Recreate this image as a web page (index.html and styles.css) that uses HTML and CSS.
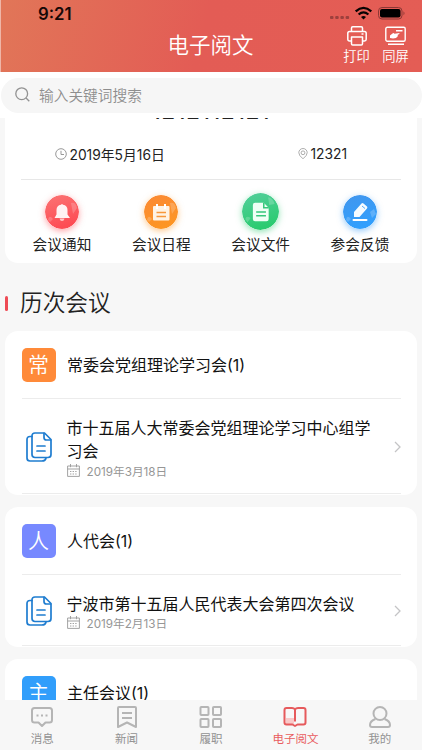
FILE: index.html
```html
<!DOCTYPE html>
<html lang="zh-CN">
<head>
<meta charset="utf-8">
<meta name="viewport" content="width=device-width, initial-scale=1">
<title>电子阅文</title>
<link rel="stylesheet" href="styles.css">
</head>
<body>
<svg class="defs" width="0" height="0">
  <defs>
    <linearGradient id="red" x1="0" y1="0" x2="0.3" y2="1"><stop stop-color="#fb7474"/><stop offset="1" stop-color="#fd4c54"/></linearGradient>
    <linearGradient id="orange" x1="0" y1="0" x2="0.3" y2="1"><stop stop-color="#fb8934"/><stop offset="1" stop-color="#fd9524"/></linearGradient>
    <linearGradient id="green" x1="0" y1="0" x2="0.3" y2="1"><stop stop-color="#54cf9c"/><stop offset="1" stop-color="#2bcb70"/></linearGradient>
    <linearGradient id="blue" x1="0" y1="0" x2="0.3" y2="1"><stop stop-color="#4296ed"/><stop offset="1" stop-color="#319ffd"/></linearGradient>
    <symbol id="docs" viewBox="0 0 26 30">
      <g fill="none" stroke="#1f7dd0" stroke-width="1.7" stroke-linejoin="round" stroke-linecap="round">
        <path d="M6 4.500H4Q1 4.500 1 7.500V26Q1 29 4 29H16Q19.500 29 20 26"/>
        <path d="M9 1H18.500L25 7.500V22.500Q25 25.500 22 25.500H9Q6 25.500 6 22.500V4Q6 1 9 1Z"/>
        <path d="M18 1.300V5.500Q18 8 20.500 8H24.500M11 14H19M11 19H19"/>
      </g>
    </symbol>
    <symbol id="cal" viewBox="0 0 13 13">
      <g fill="none" stroke="#999" stroke-width="0.9"><path d="M.6 2H12.400V12.400H.6ZM.6 5H12.400M3.500 0V3.200M9.500 0V3.200"/><path d="M3 7.500H10M3 10H10" stroke-dasharray="1.400 1.200"/></g>
    </symbol>
    <symbol id="arrow" viewBox="0 0 7 12"><path d="M1 1L6 6L1 11" fill="none" stroke="#c4c4c6" stroke-width="1.300"/></symbol>
  </defs>
</svg>
<div class="app">
  <header class="header">
    <div class="status">
      <span class="time">9:21</span>
      <svg class="signals" width="76" height="16" viewBox="0 0 76 16">
        <g fill="#9d403d"><rect x="0" y="10" width="3.500" height="3" rx="1"/><rect x="5.200" y="10" width="3.500" height="3" rx="1"/><rect x="10.400" y="10" width="3.500" height="3" rx="1"/><rect x="15.600" y="10" width="3.500" height="3" rx="1"/></g>
        <g fill="none" stroke="#080303" stroke-width="2.300"><path d="M25.700 5.300Q33.500 -1.500 41.300 5.300"/><path d="M28.600 8.500Q33.500 4.300 38.400 8.500"/></g>
        <path d="M31 10.900Q33.500 8.900 36 10.900L33.500 13.500Z" fill="#080303"/>
        <rect x="48.500" y="1.500" width="23.500" height="11.500" rx="3.500" fill="none" stroke="#8c3835"/>
        <rect x="50" y="3" width="20.500" height="8.500" rx="2" fill="#000"/>
        <path d="M73.500 5.200Q75.500 7.200 73.500 9.300Z" fill="#8c3835"/>
      </svg>
    </div>
    <div class="navbar">
      <h1>电子阅文</h1>
      <div class="action">
        <svg width="20" height="20" viewBox="0 0 20 20" fill="none" stroke="#fff" stroke-width="1.500" stroke-linejoin="round"><path d="M4.500 5.500V2Q4.500.8 5.700.8H14.300Q15.500.8 15.500 2V5.500M4 15H2.500Q.8 15 .8 13.300V7.300Q.8 5.500 2.500 5.500H17.500Q19.200 5.500 19.200 7.300V13.300Q19.200 15 17.500 15H16M4.500 11H15.500V17.700Q15.500 19 14.300 19H5.700Q4.500 19 4.500 17.700Z"/><path d="M14.500 8H16.500"/></svg>
        <span>打印</span>
      </div>
      <div class="action">
        <svg width="21" height="20" viewBox="0 0 21 20"><g fill="none" stroke="#fff" stroke-width="1.400"><rect x=".8" y="1.300" width="19.400" height="14" rx="1.500"/><path d="M3 18.200H19M11 4.800H17.500"/></g><path d="M5 9.500L7.500 7.500Q8.500 6.500 9.500 7.800L14.500 7Q15 8 12.500 9L13 10Q11.500 12.500 8 12.500L5 12Z" fill="#fff"/></svg>
        <span>同屏</span>
      </div>
    </div>
  </header>
  <div class="search">
    <div class="pill">
      <svg width="15" height="15" viewBox="0 0 15 15" fill="none" stroke="#929292" stroke-width="1.300"><circle cx="6.700" cy="6.700" r="5.900"/><path d="M11 11L14.300 14.300"/></svg>
      <span>输入关键词搜索</span>
    </div>
  </div>
  <main class="content">
    <section class="card meeting">
      <h2>1212112121</h2>
      <div class="info">
        <div><svg width="12" height="12" viewBox="0 0 12 12" fill="none" stroke="#999"><circle cx="6" cy="6" r="5.300"/><path d="M6 2.800V6.500H9"/></svg><span>2019年5月16日</span></div>
        <div><svg width="10" height="12" viewBox="0 0 10 12" fill="none" stroke="#999" stroke-width=".8"><path d="M5 10.800Q.8 7.500 .8 4.700A4.200 4.200 0 0 1 9.200 4.700Q9.200 7.500 5 10.800Z"/><circle cx="5" cy="4.800" r="1.900"/></svg><span>12321</span></div>
      </div>
      <nav class="shortcuts">
        <div class="shortcut red"><svg viewBox="0 0 34 34"><circle cx="17" cy="17" r="17" fill="url(#red)"/><path d="M26 8Q31 7 32 13L28 19ZM3 25Q4 19 8 24L5 27Z" fill="#fff" opacity=".2"/><path d="M9.500 23L11.500 19.500V15Q11.500 10.500 16 9.800Q17 8 18 9.800Q22.500 10.500 22.500 15V19.500L25 23Z" fill="#fff" opacity=".92"/><path d="M14.500 23.500H19.500Q19 26 17 26T14.500 23.500Z" fill="#ffc4c4"/></svg><span>会议通知</span></div>
        <div class="shortcut orange"><svg viewBox="0 0 34 34"><circle cx="17" cy="17" r="17" fill="url(#orange)"/><path d="M26 8Q31 7 32 13L28 19ZM3 25Q4 19 8 24L5 27Z" fill="#fff" opacity=".2"/><rect x="9" y="11" width="16.500" height="14.500" rx="1" fill="#fff3e4"/><path d="M13 9V14M21 9V14" stroke="#fff" stroke-width="2"/><path d="M12.500 17.500H22M12.500 21.500H22" stroke="#f7983b" stroke-width="1.400"/></svg><span>会议日程</span></div>
        <div class="shortcut green"><svg viewBox="0 0 34 34"><circle cx="17" cy="17" r="17" fill="url(#green)"/><path d="M24 4Q28 4 30 10L25 11ZM3 24Q4 20 8 23L5 27Z" fill="#fff" opacity=".2"/><path d="M12 9H20L24.500 13.500V24Q24.500 26 22.500 26H12Q10 26 10 24V11Q10 9 12 9Z" fill="#effff5"/><path d="M20 9V13.500H24.500M13 17.500H22M13 21H22" stroke="#36c87b" stroke-width="1.400" fill="none"/></svg><span>会议文件</span></div>
        <div class="shortcut blue"><svg viewBox="0 0 34 34"><circle cx="17" cy="17" r="17" fill="url(#blue)"/><path d="M27 17L31 14L33 19L29 23ZM3 25Q4 19 8 24L5 27Z" fill="#fff" opacity=".2"/><path d="M11 22V17L18.500 8.500Q19.500 7.500 20.500 8.500L24 11.500Q24.800 12.500 24 13.500L16.500 22Z" fill="#f5fbff"/><path d="M19 11L22 13.500" stroke="#55a9f5"/><path d="M10.500 25H23.500" stroke="#fff" stroke-width="2" stroke-linecap="round"/></svg><span>参会反馈</span></div>
      </nav>
    </section>
    <h3 class="section-title">历次会议</h3>
    <section class="card group">
      <div class="group-head"><b class="badge b-orange">常</b><span>常委会党组理论学习会(1)</span></div>
      <div class="item tall"><svg class="docs"><use href="#docs"/></svg><div class="text"><p>市十五届人大常委会党组理论学习中心组学习会</p><div class="date"><svg><use href="#cal"/></svg><span>2019年3月18日</span></div></div><svg class="arrow"><use href="#arrow"/></svg></div>
    </section>
    <section class="card group">
      <div class="group-head"><b class="badge b-purple">人</b><span>人代会(1)</span></div>
      <div class="item"><svg class="docs"><use href="#docs"/></svg><div class="text"><p>宁波市第十五届人民代表大会第四次会议</p><div class="date"><svg><use href="#cal"/></svg><span>2019年2月13日</span></div></div><svg class="arrow"><use href="#arrow"/></svg></div>
    </section>
    <section class="card group">
      <div class="group-head"><b class="badge b-blue">主</b><span>主任会议(1)</span></div>
    </section>
  </main>
  <footer class="tabs">
    <div class="tab"><svg viewBox="0 0 24 24"><path d="M4.500 3H19.500Q22 3 22 5.500V15Q22 17.500 19.500 17.500H15.500L12 21L8.500 17.500H4.500Q2 17.500 2 15V5.500Q2 3 4.500 3Z"/><path d="M6.500 10.500H17.500" stroke-dasharray="2 2.500" stroke-width="2"/></svg><span>消息</span></div>
    <div class="tab"><svg viewBox="0 0 24 24"><path d="M4 2H20Q21 2 21 3V22L12 17.500L3 22V3Q3 2 4 2ZM7 8H17M7 13H17"/></svg><span>新闻</span></div>
    <div class="tab"><svg viewBox="0 0 24 24"><rect x="1.500" y="2" width="8" height="8" rx=".8"/><rect x="14" y="2" width="8" height="8" rx=".8"/><rect x="1.500" y="14" width="8" height="8" rx=".8"/><rect x="14" y="14" width="8" height="8" rx=".8"/></svg><span>履职</span></div>
    <div class="tab active"><svg viewBox="0 0 24 24"><path d="M3 13H11V19H3Z" fill="#f9c9c9" stroke="none"/><path d="M12 4.500Q11 3 9 3H3.500Q1.500 3 1.500 5V17.500Q1.500 19.500 3.500 19.500H9.500L12 21L14.500 19.500H20.500Q22.500 19.500 22.500 17.500V5Q22.500 3 20.500 3H15Q13 3 12 4.500V16.500"/></svg><span>电子阅文</span></div>
    <div class="tab"><svg viewBox="0 0 24 24"><circle cx="12" cy="8.500" r="6.500"/><path d="M7.500 14Q2 16 2 20Q2 22 4 22H20Q22 22 22 20Q22 16 16.500 14"/></svg><span>我的</span></div>
  </footer>
</div>
</body>
</html>
```

FILE: styles.css
```css
* { box-sizing: border-box; margin: 0; padding: 0; }
body { font-family: Inter, "Noto Sans CJK SC", sans-serif; color: #222; background: #f7f7f7; }
svg { display: block; flex: none; }
span { white-space: nowrap; }
.defs { position: absolute; }
.app { width: 422px; height: 750px; display: flex; flex-direction: column; overflow: hidden; }

.header { height: 72px; flex: none; background: linear-gradient(105deg, #e17658 0, #e35c55 48%, #e45d55 100%); border-left: 1px solid #efb6a8; color: #fff; }
.status { height: 26px; display: flex; justify-content: space-between; padding: 6px 16px 0 37px; }
.time { font-size: 16.800px; line-height: 16px; font-weight: 600; color: #160807; }
.navbar { height: 46px; display: flex; padding-right: 7px; }
.navbar h1 { flex: 1; padding: 5px 0 0 83px; text-align: center; font-size: 21.500px; line-height: 28px; font-weight: 350; }
.action { width: 39px; display: flex; flex-direction: column; align-items: center; }
.action span { font-size: 13.300px; line-height: 20px; font-weight: 350; }

.search { height: 46px; flex: none; background: #fff; padding: 5.500px 0 5px 1px; }
.pill { height: 35.500px; border-radius: 18px; background: #f6f6f6; display: flex; align-items: center; gap: 9px; padding: 0 0 1px 14px; color: #8e8e8e; font-size: 14.700px; font-weight: 350; }

.content { flex: 1; min-height: 0; overflow: hidden; padding: 0 5px; }
.card { background: #fff; border-radius: 13px; }
.meeting { display: flow-root; height: 145px; border-top-left-radius: 0; border-top-right-radius: 0; padding: 0 16px; }
.meeting h2 { height: 24px; margin-top: -19px; font-size: 22px; line-height: 24px; font-weight: 500; letter-spacing: 1px; text-align: center; }
.info { height: 57px; display: flex; border-bottom: 1px solid #e7e7e7; font-size: 13.800px; padding-top: 6px; }
.info div { display: flex; align-items: center; gap: 2.500px; }
.info div:first-child { width: 244px; padding-left: 34px; }
.info div:last-child { padding-left: 33px; }
.shortcuts { display: flex; justify-content: space-between; padding: 14.500px 11px 0 11px; }
.shortcut { width: 60px; display: flex; flex-direction: column; align-items: center; font-size: 14.700px; }
.shortcut svg { width: 34px; height: 34px; border-radius: 50%; }
.shortcut span { line-height: 22px; margin-top: 5.500px; }
.red svg { box-shadow: 0 2px 6px #fd4c5480; }
.orange svg { box-shadow: 0 2px 6px #fd952480; }
.green svg { box-shadow: 0 2px 6px #2bcb7080; width: 37px; height: 37px; margin: -2px 0 -1px; }
.blue svg { box-shadow: 0 2px 6px #3197f580; }

.section-title { height: 68px; display: flex; align-items: center; gap: 12px; padding-top: 12px; font-size: 22.700px; line-height: 30px; font-weight: 350; }
.section-title::before { content: ""; width: 3px; height: 15px; border-radius: 2px; background: #ee4b55; }
.group { padding: 0 16.500px 1px; margin-bottom: 12px; color: #111; font-size: 16px; }
.group-head { height: 68px; display: flex; align-items: center; gap: 11.500px; border-bottom: 1px solid #ececec; }
.group-head > span { padding-bottom: 2px; }
.badge { width: 34px; height: 34px; border-radius: 5px; color: #fff; font-size: 21px; line-height: 33px; font-weight: 350; text-align: center; }
.b-orange { background: #ff8a39; }
.b-purple { background: #7789ff; }
.b-blue { background: #319efb; }
.item { height: 71px; display: flex; align-items: center; padding: 2px 0 0 4px; border-bottom: 1px solid #ececec; }
.item.tall { height: 95px; }
.docs { width: 26px; height: 30px; }
.text { width: 306px; margin-left: 15px; }
.text p { line-height: 23px; }
.date { display: flex; align-items: center; gap: 7px; height: 14px; font-size: 11.700px; color: #969696; }
.date svg { width: 13px; height: 13px; }
.arrow { width: 7px; height: 12px; margin-left: 21px; }

.tabs { height: 50.500px; flex: none; display: flex; background: #f7f7f7; padding-top: 5px; }
.tab { flex: 1; display: flex; flex-direction: column; align-items: center; color: #929292; font-size: 11.500px; }
.tab svg { width: 24px; height: 24px; fill: none; stroke: #b5b5b5; stroke-width: 2; stroke-linejoin: round; }
.tab span { line-height: 18px; margin-top: 1px; }
.active { color: #e95d5f; }
.active svg { stroke: #e65a5c; }
```
